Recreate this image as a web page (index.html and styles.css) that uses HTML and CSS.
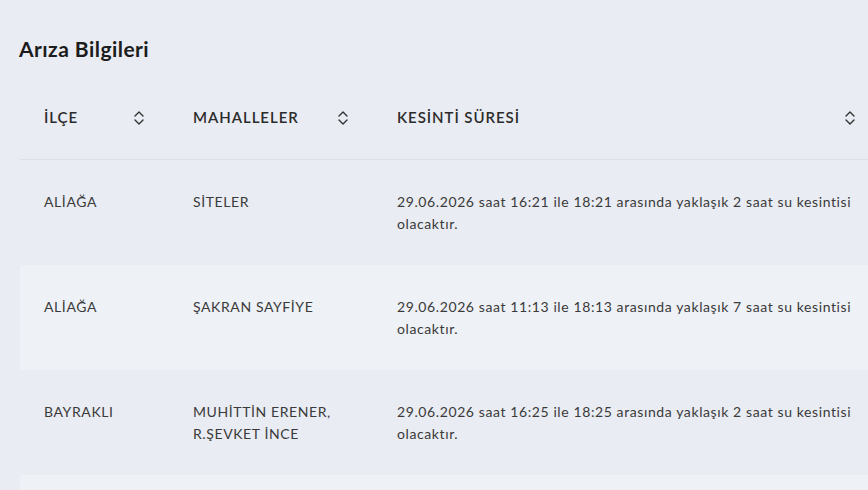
FILE: index.html
```html
<!DOCTYPE html>
<html lang="tr">
<head>
<meta charset="utf-8">
<title>Arıza Bilgileri</title>
<link rel="stylesheet" href="styles.css">
</head>
<body>
<main class="page">
  <h1 class="title">Arıza Bilgileri</h1>
  <table class="outages">
    <colgroup>
      <col class="col-district">
      <col class="col-hood">
      <col class="col-time">
    </colgroup>
    <thead>
      <tr>
        <th><div class="th-inner"><span>İLÇE</span><svg class="sort" viewBox="0 0 12 18" width="12" height="18"><path d="M2 7 L6 3 L10 7 M2 11 L6 15 L10 11" fill="none" stroke="#333" stroke-width="1.4" stroke-linecap="round" stroke-linejoin="round"/></svg></div></th>
        <th><div class="th-inner"><span>MAHALLELER</span><svg class="sort" viewBox="0 0 12 18" width="12" height="18"><path d="M2 7 L6 3 L10 7 M2 11 L6 15 L10 11" fill="none" stroke="#333" stroke-width="1.4" stroke-linecap="round" stroke-linejoin="round"/></svg></div></th>
        <th><div class="th-inner"><span>KESİNTİ SÜRESİ</span><svg class="sort" viewBox="0 0 12 18" width="12" height="18"><path d="M2 7 L6 3 L10 7 M2 11 L6 15 L10 11" fill="none" stroke="#333" stroke-width="1.4" stroke-linecap="round" stroke-linejoin="round"/></svg></div></th>
      </tr>
    </thead>
    <tbody>
      <tr>
        <td>ALİAĞA</td>
        <td>SİTELER</td>
        <td>29.06.2026 saat 16:21 ile 18:21 arasında yaklaşık 2 saat su kesintisi olacaktır.</td>
      </tr>
      <tr class="alt">
        <td>ALİAĞA</td>
        <td>ŞAKRAN SAYFİYE</td>
        <td>29.06.2026 saat 11:13 ile 18:13 arasında yaklaşık 7 saat su kesintisi olacaktır.</td>
      </tr>
      <tr>
        <td>BAYRAKLI</td>
        <td>MUHİTTİN ERENER, R.ŞEVKET İNCE</td>
        <td>29.06.2026 saat 16:25 ile 18:25 arasında yaklaşık 2 saat su kesintisi olacaktır.</td>
      </tr>
      <tr class="alt">
        <td>BORNOVA</td>
        <td>KAZIMDİRİK</td>
        <td>29.06.2026 saat 17:00 ile 19:00 arasında yaklaşık 2 saat su kesintisi olacaktır.</td>
      </tr>
    </tbody>
  </table>
</main>
</body>
</html>
```

FILE: styles.css
```css
html, body {
  margin: 0;
  padding: 0;
  background: #e9ecf2;
  overflow: hidden;
}

body {
  font-family: "Lato", "Noto Sans", sans-serif;
  color: #333;
}

.page {
  padding: 37px 0 0 20px;
  width: 860px;
}

.title {
  margin: 0 0 0 -1px;
  font-size: 21px;
  line-height: 24px;
  font-weight: 700;
  letter-spacing: 0.45px;
  color: #1c1c1c;
}

.outages {
  margin-top: 19px;
  width: 860px;
  border-collapse: collapse;
  table-layout: fixed;
}

.col-district { width: 149px; }
.col-hood { width: 204px; }

.outages th {
  height: 74px;
  padding: 0 24px 5px;
  text-align: left;
  vertical-align: middle;
  font-size: 15px;
  font-weight: 600;
  letter-spacing: 0.95px;
  color: #2b2b2b;
  border-bottom: 1px solid #dcdfe6;
}

.th-inner {
  display: flex;
  align-items: center;
  justify-content: space-between;
}

.sort {
  display: block;
  margin-top: 1px;
}

.outages td {
  padding: 31px 24px 30px;
  vertical-align: top;
  font-size: 14px;
  line-height: 22px;
  letter-spacing: 0.6px;
  color: #3a3a3a;
}

.outages tr.alt td {
  background: #eef1f6;
}
```
